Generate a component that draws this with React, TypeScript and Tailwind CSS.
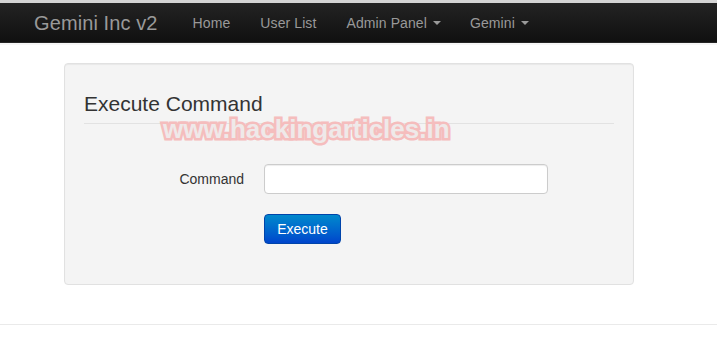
import React from "react";

function Caret() {
  return (
    <span className="inline-block ml-[6px] align-middle w-0 h-0 border-l-[4px] border-r-[4px] border-t-[4px] border-l-transparent border-r-transparent border-t-[#999999] mt-[-2px]" />
  );
}

export default function App() {
  return (
    <div className="relative w-[717px] h-[345px] bg-white overflow-hidden" style={{ fontFamily: '"Liberation Sans", Arial, sans-serif' }}>
      <div className="h-[3px] bg-[#d4d4d4]" />
      <div className="h-[40px] flex items-center bg-gradient-to-b from-[#232323] to-[#101010] border-b border-[#252525]">
        <span className="pl-[34px] pr-[20px] text-[20px] text-[#999999] leading-[20px] tracking-[0.1px]">Gemini Inc v2</span>
        <nav className="flex text-[14px] text-[#999999] leading-[20px] tracking-[0.1px]">
          <span className="px-[15px]">Home</span>
          <span className="px-[15px]">User List</span>
          <span className="px-[15px]">Admin Panel<Caret /></span>
          <span className="px-[14px]">Gemini<Caret /></span>
        </nav>
      </div>
      <div className="h-[2px] bg-[#f6f6f6]" />
      <div className="pl-[64px] pt-[18px]">
        <div className="w-[570px] h-[222px] bg-[#f4f4f4] border border-[#e1e1e1] rounded-[4px] px-[19px] pt-[20px] shadow-[inset_0_1px_1px_rgba(0,0,0,0.05)]">
          <div className="h-[40px] leading-[40px] text-[21px] text-[#333333] border-b border-[#e2e2e2]">Execute Command</div>
          <div className="mt-[40px] flex items-center">
            <label className="w-[160px] text-right text-[14px] text-[#333333]">Command</label>
            <div className="ml-[20px] w-[284px] h-[30px] bg-white border border-[#cccccc] rounded-[4px] shadow-[inset_0_1px_1px_rgba(0,0,0,0.075)]" />
          </div>
          <div className="mt-[20px] ml-[180px]">
            <div className="w-[77px] h-[30px] flex items-center justify-center rounded-[4px] border border-[#0044aa] bg-gradient-to-b from-[#0088cc] to-[#0044cc] text-white text-[14px]">Execute</div>
          </div>
        </div>
      </div>
      <div className="mt-[39px] border-t border-[#eaeaea]" />
      <div
        className="absolute left-[163px] top-[113px] text-[26px] font-bold leading-[32px] text-[#efe9e9] [-webkit-text-stroke:5px_#f5bdbd] [paint-order:stroke_fill]"
      >
        www.hackingarticles.in
      </div>
    </div>
  );
}
